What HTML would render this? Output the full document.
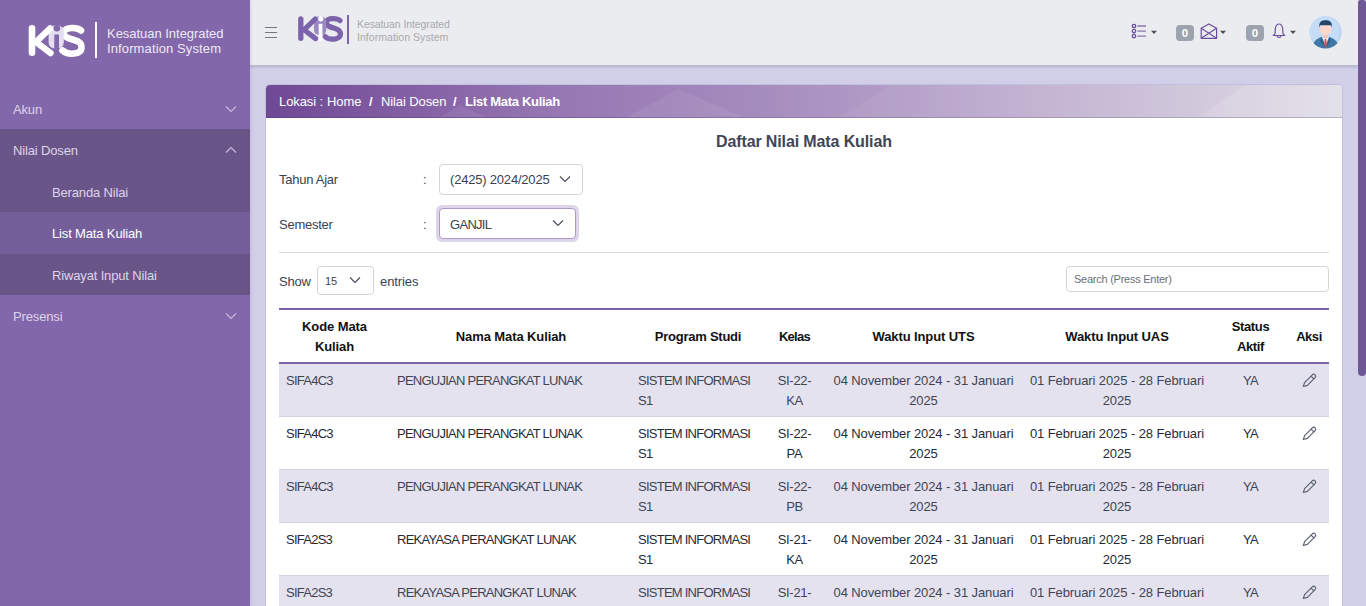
<!DOCTYPE html>
<html><head><meta charset="utf-8">
<style>
*{box-sizing:border-box;margin:0;padding:0}
html,body{width:1366px;height:606px;overflow:hidden;background:#d1cfe7;font-family:"Liberation Sans",sans-serif;color:#3b4151}
.abs{position:absolute;white-space:nowrap}
#side{position:absolute;left:0;top:0;width:250px;height:606px;background:#8267aa;box-shadow:1px 0 3px rgba(60,60,110,.12);z-index:2}
.mi{position:absolute;left:0;width:250px;height:41.5px;color:#ddd4ea;font-size:13px;letter-spacing:-.15px;line-height:43.5px;padding-left:13px}
.mi.sub{padding-left:52px;background:#6a5589}
.mi .ch{position:absolute;left:225px;top:17px;line-height:0}
#hdr{position:absolute;left:250px;top:0;width:1108px;height:66px;background:#ebecef;border-bottom:1px solid #b9bccb;box-shadow:0 1px 2px rgba(70,75,110,.22)}
#sb{position:absolute;left:1358px;top:0;width:8px;height:376px;background:#6f5694;border-radius:3px 3px 4px 4px}
#card{position:absolute;left:266px;top:85px;width:1076px;height:540px;background:#fff;border-radius:4px 4px 0 0;box-shadow:0 0 0 1px rgba(150,140,190,.25)}
#bc{position:absolute;left:0;top:0;width:1076px;height:33px;border-radius:4px 4px 0 0;overflow:hidden;background:linear-gradient(90deg,#6f4895 0%,#9777b3 27%,#a58cbe 46%,#b9a5cb 64%,#cbbfd7 82%,#dedce6 100%)}
.bct{position:absolute;top:0;line-height:34px;font-size:13px;color:#fff;letter-spacing:-.1px;white-space:nowrap}
.lbl{position:absolute;font-size:13px;letter-spacing:-.25px;color:#3b4151;white-space:nowrap;line-height:16px}
.sel{position:absolute;background:#fff;border:1px solid #d2d5dc;border-radius:4px}
.sel .t{position:absolute;left:10px;font-size:13px;color:#3b4151;white-space:nowrap;letter-spacing:-.2px}
.sel .ch{position:absolute;line-height:0}
.tr{position:absolute;left:279px;width:1050px;height:53px;border-bottom:1px solid #d6d2e2}
.td{position:absolute;top:7px;font-size:13px;line-height:20px;color:inherit;white-space:nowrap;letter-spacing:-.1px}
.td.up{letter-spacing:-.75px}
.td.c{text-align:center}
.pen{position:absolute;top:8px;line-height:0}
.th{position:absolute;font-size:13px;line-height:20px;font-weight:bold;color:#111;text-align:center;white-space:nowrap;letter-spacing:-.1px}
</style></head><body>
<div id="side">
<svg class="abs" style="left:26px;top:21px" width="64.00" height="40.00" viewBox="0 0 64 40">
<g fill="none" stroke-linecap="round" stroke-linejoin="round">
<path d="M55 9.5 C51 6 40 6 38 10.5 C36 16 44 18 48 19 C54 20.5 56 23 55.5 27 C55 33.5 42 34.5 36.5 29.5" stroke="#fff" stroke-width="6.6"/>
<rect x="22.6" y="4.5" width="15.2" height="23" rx="6" fill="#e4def0" stroke="none"/>
<path d="M6 7.3 V31.7" stroke="#fff" stroke-width="6.6"/>
<path d="M24 7.5 L10 21 L24.5 32" stroke="#fff" stroke-width="6.4"/>
<path d="M30.65 13.5 V35" stroke="#8267aa" stroke-width="4.7" stroke-linecap="butt"/>
<circle cx="30.9" cy="7.2" r="3.3" fill="#8267aa" stroke="none"/>
</g></svg>
<div class="abs" style="left:94.5px;top:22px;width:2px;height:36px;background:#fff"></div>
<div class="abs" style="left:107px;top:25.5px;font-size:13px;line-height:15.5px;color:#efe9f6;letter-spacing:-.03px">Kesatuan Integrated<br><span style="letter-spacing:.12px">Information System</span></div>
<div class="mi" style="top:87.5px">Akun<span class="ch"><svg width="12" height="8" viewBox="0 0 12 8"><path d="M1 1.5 6 6.5 11 1.5" fill="none" stroke="#c9b9df" stroke-width="1.2"/></svg></span></div>
<div class="mi" style="top:129px;background:#6a5589">Nilai Dosen<span class="ch"><svg width="12" height="8" viewBox="0 0 12 8"><path d="M1 6.5 6 1.5 11 6.5" fill="none" stroke="#c9b9df" stroke-width="1.2"/></svg></span></div>
<div class="mi sub" style="top:170.5px">Beranda Nilai</div>
<div class="mi sub" style="top:212px;background:#755f9b;color:#fff">List Mata Kuliah</div>
<div class="mi sub" style="top:253.5px">Riwayat Input Nilai</div>
<div class="mi" style="top:295px">Presensi<span class="ch"><svg width="12" height="8" viewBox="0 0 12 8"><path d="M1 1.5 6 6.5 11 1.5" fill="none" stroke="#c9b9df" stroke-width="1.2"/></svg></span></div>
</div>
<div id="hdr"></div>
<div class="abs" style="left:265px;top:27px;width:12px;height:11px">
 <div class="abs" style="left:0;top:0;width:12px;height:1px;background:#74777f"></div>
 <div class="abs" style="left:0;top:5px;width:12px;height:1px;background:#74777f"></div>
 <div class="abs" style="left:0;top:10px;width:12px;height:1px;background:#74777f"></div>
</div>
<svg class="abs" style="left:296.2px;top:13.4px" width="51.20" height="32.00" viewBox="0 0 64 40">
<g fill="none" stroke-linecap="round" stroke-linejoin="round">
<path d="M55 9.5 C51 6 40 6 38 10.5 C36 16 44 18 48 19 C54 20.5 56 23 55.5 27 C55 33.5 42 34.5 36.5 29.5" stroke="#7d62ac" stroke-width="6.6"/>
<rect x="22.6" y="4.5" width="15.2" height="23" rx="6" fill="#9a88c0" stroke="none"/>
<path d="M6 7.3 V31.7" stroke="#7d62ac" stroke-width="6.6"/>
<path d="M24 7.5 L10 21 L24.5 32" stroke="#7d62ac" stroke-width="6.4"/>
<path d="M30.65 13.5 V35" stroke="#fbfaff" stroke-width="4.7" stroke-linecap="butt"/>
<circle cx="30.9" cy="7.2" r="3.3" fill="#fbfaff" stroke="none"/>
</g></svg>
<div class="abs" style="left:347px;top:15px;width:1.5px;height:29px;background:#7d62ac"></div>
<div class="abs" style="left:357px;top:18px;font-size:10.5px;line-height:12.5px;color:#a9a9ac;letter-spacing:-.1px">Kesatuan Integrated<br><span style="letter-spacing:.05px">Information System</span></div>
<!-- header icons -->
<svg class="abs" style="left:1131px;top:23px" width="28" height="17" viewBox="0 0 28 17">
<g fill="none" stroke="#6a4fa0" stroke-width="1.3"><circle cx="3" cy="3" r="1.7"/><circle cx="3" cy="8.1" r="1.7"/><circle cx="3" cy="13.1" r="1.7"/></g>
<g stroke="#8b74b4" stroke-width="1.4"><path d="M6.5 3H15M6.5 8.1H15M6.5 13.1H15"/></g>
<path d="M20 7.8H26L23 10.9z" fill="#4a4d57"/></svg>
<div class="abs" style="left:1176px;top:25px;width:18px;height:16px;border-radius:4px;background:#9ca3ae;color:#fff;font-weight:bold;font-size:11.5px;line-height:17px;text-align:center">0</div>
<svg class="abs" style="left:1200px;top:23px" width="28" height="17" viewBox="0 0 28 17">
<g fill="none" stroke="#6a4fa0" stroke-width="1.2" stroke-linejoin="round"><path d="M1.2 5.3 8.9 0.9 16.6 5.3V15.4H1.2z"/><path d="M1.2 5.3 16.6 15.2M16.6 5.3 1.2 15.2"/></g>
<path d="M20 7.8H26L23 10.9z" fill="#4a4d57"/></svg>
<div class="abs" style="left:1246px;top:25px;width:18px;height:16px;border-radius:4px;background:#9ca3ae;color:#fff;font-weight:bold;font-size:11.5px;line-height:17px;text-align:center">0</div>
<svg class="abs" style="left:1271px;top:23px" width="28" height="17" viewBox="0 0 28 17">
<g fill="none" stroke="#6a4fa0" stroke-width="1.2" stroke-linejoin="round"><path d="M3.6 11.4 C4.6 9.6 4.1 7 4.4 5.2 C4.9 2.4 6.6 1 8 1 C9.4 1 11.1 2.4 11.6 5.2 C11.9 7 11.4 9.6 12.4 11.4 L13.8 12.5 H2.2z"/><path d="M6 12.7 C6.2 15 9.8 15 10 12.7"/></g>
<path d="M19 7.8H25L22 10.9z" fill="#4a4d57"/></svg>
<svg class="abs" style="left:1309px;top:16px" width="33" height="33" viewBox="0 0 33 33">
<defs><clipPath id="cc"><circle cx="16.5" cy="16.2" r="16.2"/></clipPath></defs>
<circle cx="16.5" cy="16.2" r="16.2" fill="#c5dcf6"/>
<path d="M21 0.8 A16.2 16.2 0 0 1 21 31.6 A17 17 0 0 0 21 0.8z" fill="#b7d1f2"/>
<g clip-path="url(#cc)">
<path d="M3.5 33 C3.5 25.5 7 23 12.5 21 L20.5 21 C26 23 29.5 25.5 29.5 33z" fill="#3f77a6"/>
<path d="M13 21 L16.5 30 L20 21z" fill="#f2f4f7"/>
<path d="M15.7 22.8 L17.3 22.8 L18 29.5 L16.5 32 L15 29.5z" fill="#d8545e"/>
<path d="M12.5 21 L16.5 32 L11.5 25.5z M20.5 21 L16.5 32 L21.5 25.5z" fill="#2f5f8c"/>
<rect x="14.3" y="17" width="4.4" height="5" fill="#f4c4b4"/>
<ellipse cx="16.6" cy="13.6" rx="5.8" ry="5.6" fill="#fcd9cc"/>
<path d="M10.4 12 C9.6 5.5 12.5 4.2 16.6 4.2 C20.7 4.2 23.6 5.5 22.8 12 L22.2 9.2 C19 9.4 14 8.9 11 9.3z" fill="#24466b"/>
</g></svg>
<div id="sb"></div>
<div id="card">
 <div id="bc">
  <svg class="abs" style="left:0;top:0" width="1076" height="33" viewBox="0 0 1076 33">
   <path d="M360 33 L412 4 L480 33z" fill="rgba(255,255,255,.07)"/>
   <path d="M173 33 L194 20 L222 33z" fill="rgba(255,255,255,.08)"/>
   <path d="M412 4 L350 0 H330z" fill="rgba(255,255,255,.0)"/>
   <path d="M572 33 L625 0 H1076 V33z" fill="rgba(255,255,255,.05)"/>
   <path d="M930 33 L979 0 H1076 V33z" fill="rgba(255,255,255,.12)"/>
  </svg>
  <div class="abs" style="left:0;top:32px;width:1076px;height:1px;background:linear-gradient(90deg,#5f4086 0%,#7d62a0 30%,#9583ad 55%,#aaa0bb 80%,#b4afc2 100%)"></div>
  <div class="bct" style="left:13px">Lokasi :</div>
  <div class="bct" style="left:61px">Home</div>
  <div class="bct" style="left:103px;font-weight:bold">/</div>
  <div class="bct" style="left:115px">Nilai Dosen</div>
  <div class="bct" style="left:187px;font-weight:bold">/</div>
  <div class="bct" style="left:199px;font-weight:bold;letter-spacing:-.3px">List Mata Kuliah</div>
 </div>
</div>
<div class="abs" style="left:0;top:0;width:1366px;height:606px">
<div class="abs" style="left:716px;top:133px;font-size:16px;font-weight:bold;color:#404558;letter-spacing:-.12px">Daftar Nilai Mata Kuliah</div>
<div class="lbl" style="left:279px;top:172px">Tahun Ajar</div>
<div class="lbl" style="left:423px;top:172px">:</div>
<div class="sel" style="left:439px;top:164px;width:144px;height:31px"><span class="t" style="top:7px;letter-spacing:-.2px">(2425) 2024/2025</span><span class="ch" style="left:119px;top:10px"><svg width="12" height="8" viewBox="0 0 12 8"><path d="M1 1.5 6 6.5 11 1.5" fill="none" stroke="#4a4f5c" stroke-width="1.2"/></svg></span></div>
<div class="lbl" style="left:279px;top:217px">Semester</div>
<div class="lbl" style="left:423px;top:217px">:</div>
<div class="abs" style="left:436px;top:205px;width:143px;height:37px;border-radius:6px;background:#ddd5ea"></div>
<div class="sel" style="left:439px;top:208px;width:137px;height:31px;border-color:#ad9bcb"><span class="t" style="top:8px;letter-spacing:-.7px">GANJIL</span><span class="ch" style="left:112px;top:10px"><svg width="12" height="8" viewBox="0 0 12 8"><path d="M1 1.5 6 6.5 11 1.5" fill="none" stroke="#4a4f5c" stroke-width="1.2"/></svg></span></div>
<div class="abs" style="left:279px;top:252px;width:1050px;height:1px;background:#d8d8dc"></div>
<div class="lbl" style="left:279px;top:274px">Show</div>
<div class="sel" style="left:317px;top:266px;width:57px;height:29px"><span class="t" style="left:7px;top:8px;font-size:11px">15</span><span class="ch" style="left:31px;top:9px"><svg width="12" height="8" viewBox="0 0 12 8"><path d="M1 1.5 6 6.5 11 1.5" fill="none" stroke="#4a4f5c" stroke-width="1.2"/></svg></span></div>
<div class="lbl" style="left:380px;top:274px;letter-spacing:-.1px">entries</div>
<div class="sel" style="left:1066px;top:266px;width:263px;height:26px"><span class="t" style="left:7px;top:6px;font-size:11px;color:#6b6f78;letter-spacing:-.25px">Search (Press Enter)</span></div>
<!-- table -->
<div class="abs" style="left:279px;top:308px;width:1050px;height:2px;background:#7b62a6"></div>
<div class="abs" style="left:279px;top:362px;width:1050px;height:2px;background:#7b62a6"></div>
<div class="th" style="left:279px;width:111px;top:317px">Kode Mata<br>Kuliah</div>
<div class="th" style="left:390px;width:242px;top:326.5px">Nama Mata Kuliah</div>
<div class="th" style="left:632px;width:132px;top:326.5px;letter-spacing:-.25px">Program Studi</div>
<div class="th" style="left:764px;width:61px;top:326.5px;letter-spacing:-.7px">Kelas</div>
<div class="th" style="left:825px;width:197px;top:326.5px">Waktu Input UTS</div>
<div class="th" style="left:1022px;width:190px;top:326.5px">Waktu Input UAS</div>
<div class="th" style="left:1212px;width:77px;top:317px;letter-spacing:-.35px">Status<br>Aktif</div>
<div class="th" style="left:1289px;width:40px;top:326.5px;letter-spacing:-.45px">Aksi</div>
<div class="tr" style="top:364px;background:#e5e2ef;color:#3f4452">
<div class="td up" style="left:7px">SIFA4C3</div>
<div class="td up" style="left:118px">PENGUJIAN PERANGKAT LUNAK</div>
<div class="td up" style="left:359px">SISTEM INFORMASI<br>S1</div>
<div class="td up c" style="left:485px;width:61px;letter-spacing:-.3px">SI-22-<br>KA</div>
<div class="td c" style="left:546px;width:197px">04 November 2024 - 31 Januari<br>2025</div>
<div class="td c" style="left:743px;width:190px">01 Februari 2025 - 28 Februari<br>2025</div>
<div class="td up c" style="left:933px;width:77px">YA</div>
<div class="pen" style="left:1021px"><svg width="18" height="18" viewBox="0 0 18 18"><path d="M3.3 14.5 L4.6 10.6 L12.3 2.9 C13.1 2.1 14.3 2.1 15.1 2.9 C15.9 3.7 15.9 4.9 15.1 5.7 L7.4 13.4 Z M11.1 4.1 L13.9 6.9" fill="none" stroke="#5a6070" stroke-width="1.15" stroke-linejoin="round"/></svg></div>
</div>
<div class="tr" style="top:417px;background:#ffffff;color:#262a35">
<div class="td up" style="left:7px">SIFA4C3</div>
<div class="td up" style="left:118px">PENGUJIAN PERANGKAT LUNAK</div>
<div class="td up" style="left:359px">SISTEM INFORMASI<br>S1</div>
<div class="td up c" style="left:485px;width:61px;letter-spacing:-.3px">SI-22-<br>PA</div>
<div class="td c" style="left:546px;width:197px">04 November 2024 - 31 Januari<br>2025</div>
<div class="td c" style="left:743px;width:190px">01 Februari 2025 - 28 Februari<br>2025</div>
<div class="td up c" style="left:933px;width:77px">YA</div>
<div class="pen" style="left:1021px"><svg width="18" height="18" viewBox="0 0 18 18"><path d="M3.3 14.5 L4.6 10.6 L12.3 2.9 C13.1 2.1 14.3 2.1 15.1 2.9 C15.9 3.7 15.9 4.9 15.1 5.7 L7.4 13.4 Z M11.1 4.1 L13.9 6.9" fill="none" stroke="#5a6070" stroke-width="1.15" stroke-linejoin="round"/></svg></div>
</div>
<div class="tr" style="top:470px;background:#e5e2ef;color:#3f4452">
<div class="td up" style="left:7px">SIFA4C3</div>
<div class="td up" style="left:118px">PENGUJIAN PERANGKAT LUNAK</div>
<div class="td up" style="left:359px">SISTEM INFORMASI<br>S1</div>
<div class="td up c" style="left:485px;width:61px;letter-spacing:-.3px">SI-22-<br>PB</div>
<div class="td c" style="left:546px;width:197px">04 November 2024 - 31 Januari<br>2025</div>
<div class="td c" style="left:743px;width:190px">01 Februari 2025 - 28 Februari<br>2025</div>
<div class="td up c" style="left:933px;width:77px">YA</div>
<div class="pen" style="left:1021px"><svg width="18" height="18" viewBox="0 0 18 18"><path d="M3.3 14.5 L4.6 10.6 L12.3 2.9 C13.1 2.1 14.3 2.1 15.1 2.9 C15.9 3.7 15.9 4.9 15.1 5.7 L7.4 13.4 Z M11.1 4.1 L13.9 6.9" fill="none" stroke="#5a6070" stroke-width="1.15" stroke-linejoin="round"/></svg></div>
</div>
<div class="tr" style="top:523px;background:#ffffff;color:#262a35">
<div class="td up" style="left:7px">SIFA2S3</div>
<div class="td up" style="left:118px">REKAYASA PERANGKAT LUNAK</div>
<div class="td up" style="left:359px">SISTEM INFORMASI<br>S1</div>
<div class="td up c" style="left:485px;width:61px;letter-spacing:-.3px">SI-21-<br>KA</div>
<div class="td c" style="left:546px;width:197px">04 November 2024 - 31 Januari<br>2025</div>
<div class="td c" style="left:743px;width:190px">01 Februari 2025 - 28 Februari<br>2025</div>
<div class="td up c" style="left:933px;width:77px">YA</div>
<div class="pen" style="left:1021px"><svg width="18" height="18" viewBox="0 0 18 18"><path d="M3.3 14.5 L4.6 10.6 L12.3 2.9 C13.1 2.1 14.3 2.1 15.1 2.9 C15.9 3.7 15.9 4.9 15.1 5.7 L7.4 13.4 Z M11.1 4.1 L13.9 6.9" fill="none" stroke="#5a6070" stroke-width="1.15" stroke-linejoin="round"/></svg></div>
</div>
<div class="tr" style="top:576px;background:#e5e2ef;color:#3f4452">
<div class="td up" style="left:7px">SIFA2S3</div>
<div class="td up" style="left:118px">REKAYASA PERANGKAT LUNAK</div>
<div class="td up" style="left:359px">SISTEM INFORMASI<br>S1</div>
<div class="td up c" style="left:485px;width:61px;letter-spacing:-.3px">SI-21-<br>KA</div>
<div class="td c" style="left:546px;width:197px">04 November 2024 - 31 Januari<br>2025</div>
<div class="td c" style="left:743px;width:190px">01 Februari 2025 - 28 Februari<br>2025</div>
<div class="td up c" style="left:933px;width:77px">YA</div>
<div class="pen" style="left:1021px"><svg width="18" height="18" viewBox="0 0 18 18"><path d="M3.3 14.5 L4.6 10.6 L12.3 2.9 C13.1 2.1 14.3 2.1 15.1 2.9 C15.9 3.7 15.9 4.9 15.1 5.7 L7.4 13.4 Z M11.1 4.1 L13.9 6.9" fill="none" stroke="#5a6070" stroke-width="1.15" stroke-linejoin="round"/></svg></div>
</div>
</div>
</body></html>
